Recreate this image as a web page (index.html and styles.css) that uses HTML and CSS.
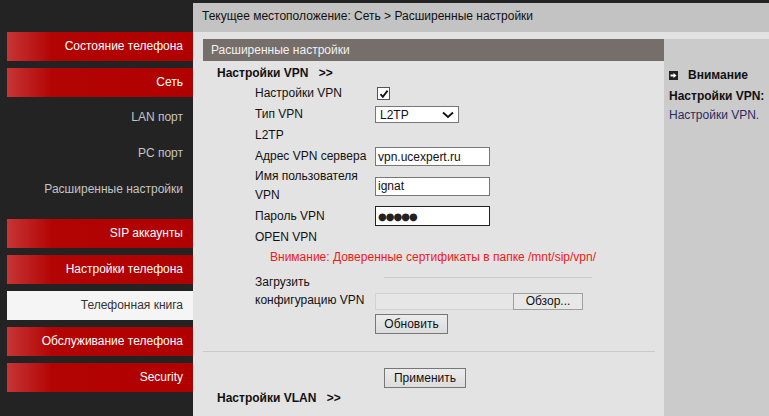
FILE: index.html
```html
<!DOCTYPE html>
<html lang="ru">
<head>
    <meta charset="UTF-8">
    <title>Расширенные настройки</title>
    <link rel="stylesheet" href="styles.css">
</head>
<body>
    <div class="page">
        <nav class="sidebar">
            <a class="nav-item">Состояние телефона</a>
            <a class="nav-item">Сеть</a>
            <div class="sub">
                <a class="sub-item">LAN порт</a>
                <a class="sub-item">PC порт</a>
                <a class="sub-item">Расширенные настройки</a>
            </div>
            <a class="nav-item">SIP аккаунты</a>
            <a class="nav-item">Настройки телефона</a>
            <a class="nav-item active">Телефонная книга</a>
            <a class="nav-item">Обслуживание телефона</a>
            <a class="nav-item">Security</a>
        </nav>

        <main class="main">
            <div class="crumbs">Текущее местоположение: Сеть &gt; Расширенные настройки</div>
            <div class="workspace">
                <section class="content">
                    <div class="panel-title">Расширенные настройки</div>
                    <div class="group-title">Настройки VPN <span class="more">&gt;&gt;</span></div>

                    <div class="form">
                        <div class="row">
                            <div class="label">Настройки VPN</div>
                            <div class="control">
                                <span class="check">
                                    <svg width="10" height="10" viewBox="0 0 10 10"><path d="M1.5 5.2 L3.8 7.8 L8.6 1.6" fill="none" stroke="#111" stroke-width="1.8"/></svg>
                                </span>
                            </div>
                        </div>
                        <div class="row">
                            <div class="label">Тип VPN</div>
                            <div class="control">
                                <div class="select">
                                    <span>L2TP</span>
                                    <svg width="12" height="8" viewBox="0 0 12 8"><path d="M1 1.5 L6 6 L11 1.5" fill="none" stroke="#111" stroke-width="1.8"/></svg>
                                </div>
                            </div>
                        </div>
                        <div class="row">
                            <div class="label">L2TP</div>
                        </div>
                        <div class="row">
                            <div class="label">Адрес VPN сервера</div>
                            <div class="control"><input class="text" type="text" value="vpn.ucexpert.ru"></div>
                        </div>
                        <div class="row tall">
                            <div class="label">Имя пользователя VPN</div>
                            <div class="control"><input class="text" type="text" value="ignat"></div>
                        </div>
                        <div class="row pw">
                            <div class="label">Пароль VPN</div>
                            <div class="control"><input class="text focus dots" type="text" value="●●●●●"></div>
                        </div>
                        <div class="row">
                            <div class="label">OPEN VPN</div>
                        </div>
                        <div class="warning">Внимание: Доверенные сертификаты в папке /mnt/sip/vpn/</div>

                        <div class="upload">
                            <div class="label two">Загрузить конфигурацию VPN</div>
                            <div class="control col">
                                <div class="thin-line"></div>
                                <div class="file">
                                    <span class="file-name"></span>
                                    <span class="file-btn">Обзор...</span>
                                </div>
                                <button class="btn update">Обновить</button>
                            </div>
                        </div>
                    </div>

                    <div class="divider"></div>
                    <button class="btn apply">Применить</button>
                    <div class="group-title vlan">Настройки VLAN <span class="more">&gt;&gt;</span></div>
                </section>

                <aside class="help">
                    <div class="help-head">
                        <span class="arrow-icon">
                            <svg width="9" height="9" viewBox="0 0 9 9"><rect width="9" height="9" fill="#222"/><path d="M1.5 3.5 H4.5 V2 L7.5 4.5 L4.5 7 V5.5 H1.5 Z" fill="#fff"/></svg>
                        </span>
                        Внимание
                    </div>
                    <div class="help-title">Настройки VPN:</div>
                    <div class="help-text">Настройки VPN.</div>
                </aside>
            </div>
        </main>
    </div>
</body>
</html>
```

FILE: styles.css
```css
body {
    margin: 0;
    padding: 0;
    font-family: "Liberation Sans", Arial, sans-serif;
    font-size: 12px;
    background-color: #232323;
    color: #111;
}

.page {
    display: flex;
    height: 416px;
    overflow: hidden;
}

/* sidebar */
.sidebar {
    width: 186px;
    padding: 32px 0 0 7px;
    flex-shrink: 0;
}

.nav-item {
    display: block;
    height: 29px;
    line-height: 29px;
    margin-bottom: 7px;
    padding-right: 10px;
    text-align: right;
    color: #fff;
    background: linear-gradient(to right, #c73535 0, #b30404 45px, #b00000 100%);
}

.nav-item.active {
    background: #f5f5f5;
    color: #333;
}

.sub {
    margin: -5px 0 12px;
}

.sub-item {
    display: block;
    height: 36px;
    line-height: 37px;
    padding-right: 10px;
    text-align: right;
    color: #c4c4c4;
}

/* main area */
.main {
    flex: 1;
    display: flex;
    flex-direction: column;
}

.crumbs {
    margin-top: 3px;
    height: 29px;
    line-height: 26px;
    padding-left: 9px;
    background: #c3c3c3;
    color: #111;
}

.workspace {
    flex: 1;
    display: flex;
    padding-top: 7px;
    background: #e2e2e2;
}

.content {
    flex: 1;
    padding-left: 10px;
    background: #e3e3e3;
}

.panel-title {
    height: 22px;
    line-height: 22px;
    padding-left: 8px;
    background: #756e6b;
    color: #f2f2f2;
}

.group-title {
    margin-top: 4px;
    line-height: 16px;
    padding-left: 14px;
    font-weight: bold;
}

.group-title .more {
    margin-left: 7px;
}

.form {
    margin-top: 2px;
    padding-left: 52px;
}

.row {
    display: flex;
    align-items: center;
    height: 21px;
}

.row.tall {
    height: 38px;
}

.row.pw {
    height: 22px;
}

.label {
    width: 120px;
    flex-shrink: 0;
    line-height: 19px;
}

.row.tall .label {
    width: 110px;
}

.row.tall .control {
    margin-left: 10px;
}

.check {
    display: flex;
    align-items: center;
    justify-content: center;
    width: 11px;
    height: 11px;
    margin-left: 2px;
    border: 1px solid #555;
    background: #fff;
}

.select {
    display: flex;
    align-items: center;
    justify-content: space-between;
    box-sizing: border-box;
    width: 84px;
    height: 17px;
    padding: 0 4px 0 4px;
    border: 1px solid #777;
    background: #fff;
}

.text {
    box-sizing: border-box;
    width: 115px;
    height: 19px;
    margin: 0;
    padding: 0 2px;
    border: 1px solid #777;
    background: #fff;
    font-family: inherit;
    font-size: 12px;
    color: #111;
}

.text.focus {
    height: 20px;
    border: 1px solid #222;
    outline: none;
}

.text.dots {
    font-family: "DejaVu Sans", sans-serif;
    font-size: 10px;
    letter-spacing: -1px;
    color: #222;
}

.warning {
    height: 19px;
    line-height: 19px;
    padding-left: 15px;
    color: #f01818;
}

.upload {
    display: flex;
}

.label.two {
    width: 120px;
    padding-top: 6px;
    line-height: 18px;
}

.control.col {
    display: flex;
    flex-direction: column;
    align-items: flex-start;
}

.thin-line {
    width: 208px;
    margin: 10px 0 0 9px;
    border-top: 1px solid #cdcdcd;
}

.file {
    display: flex;
    margin-top: 15px;
    height: 17px;
}

.file-name {
    width: 137px;
    border: 1px solid #d2d2d2;
    border-right: none;
    background: #e6e6e6;
}

.file-btn {
    width: 68px;
    line-height: 15px;
    text-align: center;
    border: 1px solid #a0a0a0;
    background: #e8e8e8;
}

.btn {
    display: block;
    height: 20px;
    padding: 0;
    border: 1px solid #777;
    background: linear-gradient(#ececec, #dcdcdc);
    font-family: inherit;
    font-size: 12px;
    color: #111;
}

.btn.update {
    width: 73px;
    margin-top: 4px;
}

.divider {
    width: 452px;
    margin-top: 17px;
    border-top: 1px solid #cacaca;
}

.btn.apply {
    width: 82px;
    margin: 16px 0 0 181px;
}

.group-title.vlan {
    margin-top: 2px;
}

/* help column */
.help {
    width: 100px;
    flex-shrink: 0;
    padding: 27px 0 0 5px;
    background: #cbcbcb;
}

.help-head {
    display: flex;
    align-items: center;
    line-height: 19px;
    font-weight: bold;
}

.arrow-icon {
    display: flex;
    margin-right: 10px;
}

.help-title {
    margin-top: 2px;
    line-height: 19px;
    font-weight: bold;
}

.help-text {
    line-height: 19px;
    color: #2b2b62;
}
```
